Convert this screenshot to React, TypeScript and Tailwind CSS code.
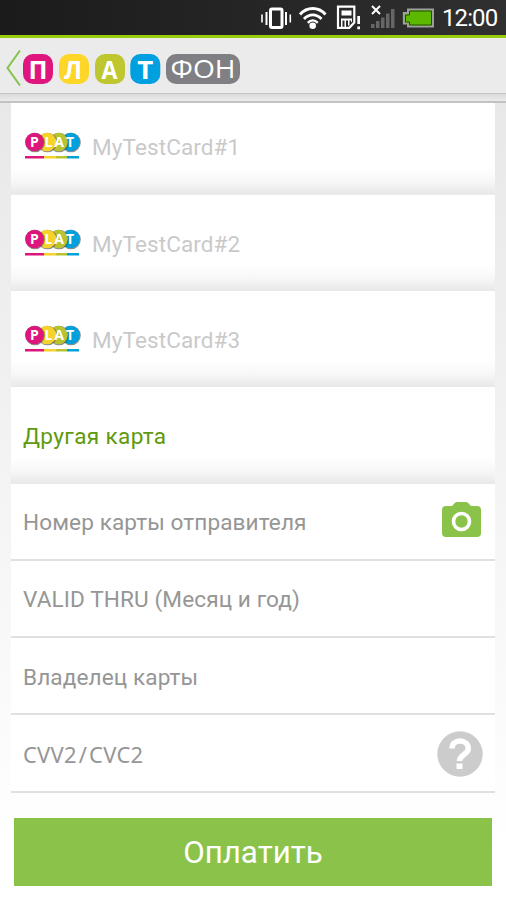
import React from "react";

function StatusIcons() {
  return (
    <svg width="180" height="35" viewBox="260 0 180 35" fill="none" className="shrink-0">
      <g stroke="#fff">
        <rect x="270.5" y="9" width="11.5" height="18.500" rx="1.5" strokeWidth="3" />
        <path d="M266.5 12v13M286 12v13" strokeWidth="2" />
        <path d="M262 14.500v8M290.3 14.500v8" strokeWidth="1.6" />
        <path d="M300 14.5c7-8 18.500-8 25.500 0" strokeWidth="2.800" />
        <path d="M304 19c5-5.500 12.500-5.500 17.500 0" strokeWidth="2.800" />
        <path d="M307.800 22.800c3-3 7-3 10 0" strokeWidth="2.400" />
      </g>
      <circle cx="312.700" cy="25.800" r="3.300" fill="#fff" />
      <path d="M338 6.700h16.300v15.800l-5 5.300H338z" stroke="#fff" strokeWidth="2.200" />
      <path d="M341.500 10.500h10v5h-10zM341 18.500h11v3l-1 1v-2h-1.500v5H348v-5h-2v7h-1.500v-7h-2v7H341zM357.300 16h2.700v8h-2.700zM357.300 26.500h2.700v2.700h-2.700z" fill="#fff" />
      <path d="M372 6l8 8M380 6l-8 8" stroke="#fff" strokeWidth="2" />
      <path d="M371 24h3.500v4H371zM376 21h3.500v7H376zM381 17.500h3.500V28H381zM386 13.500h3.500V28H386zM391 9h3.500v19H391z" fill="#666" />
      <path d="M408 9.500h25v17h-25v-3h-4.200v-10.500h4.200z" fill="#5cb900" stroke="#a0a0a0" strokeWidth="1.900" />
      <path d="M409.500 11h22v14h-22v-3h-4v-7h4z" stroke="#235000" strokeWidth="1" />
    </svg>
  );
}

function BrandLogo() {
  return (
    <svg width="240" height="42" viewBox="0 48 240 42" className="block">
      <path d="M20 50.500L7.500 68L20 85.500" fill="none" stroke="#83c34c" strokeWidth="2" />
      <rect x="23" y="54" width="30" height="30" rx="10" fill="#df167e" />
      <rect x="59" y="54" width="30" height="30" rx="10" fill="#fdd629" />
      <rect x="95" y="54" width="30" height="30" rx="10" fill="#bec72f" />
      <rect x="130.300" y="54" width="30" height="30" rx="10" fill="#009fe0" />
      <rect x="166" y="54" width="74" height="30" rx="10" fill="#808084" />
      <g fill="#fff" fontFamily="Open Sans, sans-serif" fontSize="25" fontWeight="700" textAnchor="middle">
        <text x="38" y="78.500" textLength="19" lengthAdjust="spacingAndGlyphs">П</text>
        <text x="73" y="78.500" textLength="18" lengthAdjust="spacingAndGlyphs">Л</text>
        <text x="109.500" y="78.500" textLength="16" lengthAdjust="spacingAndGlyphs">А</text>
        <text x="145.300" y="78.500" textLength="16" lengthAdjust="spacingAndGlyphs">Т</text>
      </g>
      <text x="170.500" y="78" fill="#fff" fontFamily="Open Sans, sans-serif" fontSize="25.500" textLength="65" lengthAdjust="spacingAndGlyphs">ФОН</text>
    </svg>
  );
}

function PlatBadge() {
  const dots = [
    { x: 34.5, lx: 34.500, fill: "#dc167b", letter: "P" },
    { x: 47, lx: 48.500, fill: "#f7d22b", letter: "L" },
    { x: 58.500, lx: 59, fill: "#b9c32f", letter: "A" },
    { x: 70.500, lx: 70, fill: "#00a0dc", letter: "T" },
  ];
  return (
    <svg width="59" height="30" viewBox="24 132 59 30" className="block shrink-0">
      {[...dots].reverse().map((d) => (
        <g key={d.letter}>
          <circle cx={d.x + 0.5} cy="143.500" r="9.800" fill="#444" opacity=".6" />
          <circle cx={d.x} cy="143" r="9.300" fill={d.fill} />
        </g>
      ))}
      <g fill="#fff" fontFamily="Open Sans, sans-serif" fontSize="14" fontWeight="700" textAnchor="middle">
        {dots.map((d) => <text key={d.letter} x={d.lx} y="148">{d.letter}</text>)}
      </g>
      <path d="M25 157h19v2.500H25z" fill="#dc167b" />
      <path d="M44 157h11.500v2.500H44z" fill="#f7d22b" />
      <path d="M55.500 157H67v2.500H55.500z" fill="#b9c32f" />
      <path d="M67 157h12v2.500H67z" fill="#00a0dc" />
    </svg>
  );
}

const cardShade = "bg-[linear-gradient(to_bottom,#fff_72%,#f8f8f8_86%,#e8e8e8_100%)]";

function SavedCard({ name }: { name: string }) {
  return (
    <button className={`flex h-24 w-full items-center gap-[9px] pl-[13px] text-left ${cardShade}`}>
      <PlatBadge />
      <span className="pt-[2px] text-[22.500px] leading-7 tracking-[0.100px] text-[#c9c9c9]">{name}</span>
    </button>
  );
}

function Field({ children, icon }: { children: React.ReactNode; icon?: React.ReactNode }) {
  return (
    <div className="flex h-[77.330px] items-center justify-between border-b-2 border-[#e0e0e0] bg-white pl-3 pr-3 text-[22.600px] leading-7 tracking-[0.100px] text-[#969696]">
      <span className="pt-[4px]">{children}</span>
      {icon}
    </div>
  );
}

function CameraIcon() {
  return (
    <svg width="39" height="36" viewBox="0 0 39 36" className="mr-[2.500px] -mt-[2px]">
      <path d="M4 4h6l3-3.200Q13.700 0 15 0h9q1.300 0 2 .8L29 4h6q4 0 4 4v23q0 4-4 4H4q-4 0-4-4V8q0-4 4-4z" fill="#8bc34a" />
      <circle cx="19.500" cy="19.500" r="8" fill="none" stroke="#fff" strokeWidth="3.600" />
    </svg>
  );
}

function HelpIcon() {
  return (
    <svg width="46" height="46" viewBox="0 0 46 46" className="mt-[2px]">
      <circle cx="23" cy="23" r="22.700" fill="#ccc" />
      <path d="M15 17.500c0-5 3.500-7.500 8-7.500s8.300 2.800 8.300 7.500c0 6-8.800 6-8.800 12.500" fill="none" stroke="#fff" strokeWidth="5.500" />
      <path d="M19.500 32.500h6v5.500h-6z" fill="#fff" />
    </svg>
  );
}

export default function App() {
  return (
    <div className="flex h-[900px] w-[506px] flex-col overflow-hidden bg-[linear-gradient(to_bottom,#e8e8e8_100px,#fff_850px)] font-['Roboto',sans-serif]">
      <div className="flex h-[35px] shrink-0 items-center gap-[2px] bg-[linear-gradient(to_right,#1b1b1b,#303030)] pl-[260px]">
        <StatusIcons />
        <span className="pt-[2px] text-[24px] leading-[33px] tracking-[-0.9px] text-white">12:00</span>
      </div>
      <header className="h-[58.500px] shrink-0 border-b border-t-[3.500px] border-b-[#c4c4c4] border-t-[#99cc0c] bg-[#ebebeb] pt-[10px]">
        <BrandLogo />
      </header>
      <div className="h-[9.500px] shrink-0 border-b-2 border-[#c2c2c2] bg-[linear-gradient(to_bottom,#dadada,#ececec)]" />
      <main className="px-[11px]">
        <div className="flex h-[91px] items-end overflow-hidden">
          <SavedCard name="MyTestCard#1" />
        </div>
        <div className="pt-px"><SavedCard name="MyTestCard#2" /></div>
        <SavedCard name="MyTestCard#3" />
        <div className={`flex h-[96.500px] items-center pl-3 pt-[4px] text-[22.600px] leading-7 tracking-[0.35px] text-[#5e9a0b] ${cardShade}`}>Другая карта</div>
        <Field icon={<CameraIcon />}>Номер карты отправителя</Field>
        <Field>VALID THRU (Месяц и год)</Field>
        <Field>Владелец карты</Field>
        <Field icon={<HelpIcon />}>
          <span className="font-['Noto_Sans',sans-serif] text-[22px] tracking-[0.200px]">CVV2<span className="px-[2px]">/</span>CVC2</span>
        </Field>
        <button className="mx-[3px] mt-[25.500px] block h-[67.500px] w-[478px] bg-[#8bc34a] pt-[3px] text-[31.300px] text-white">Оплатить</button>
      </main>
    </div>
  );
}
